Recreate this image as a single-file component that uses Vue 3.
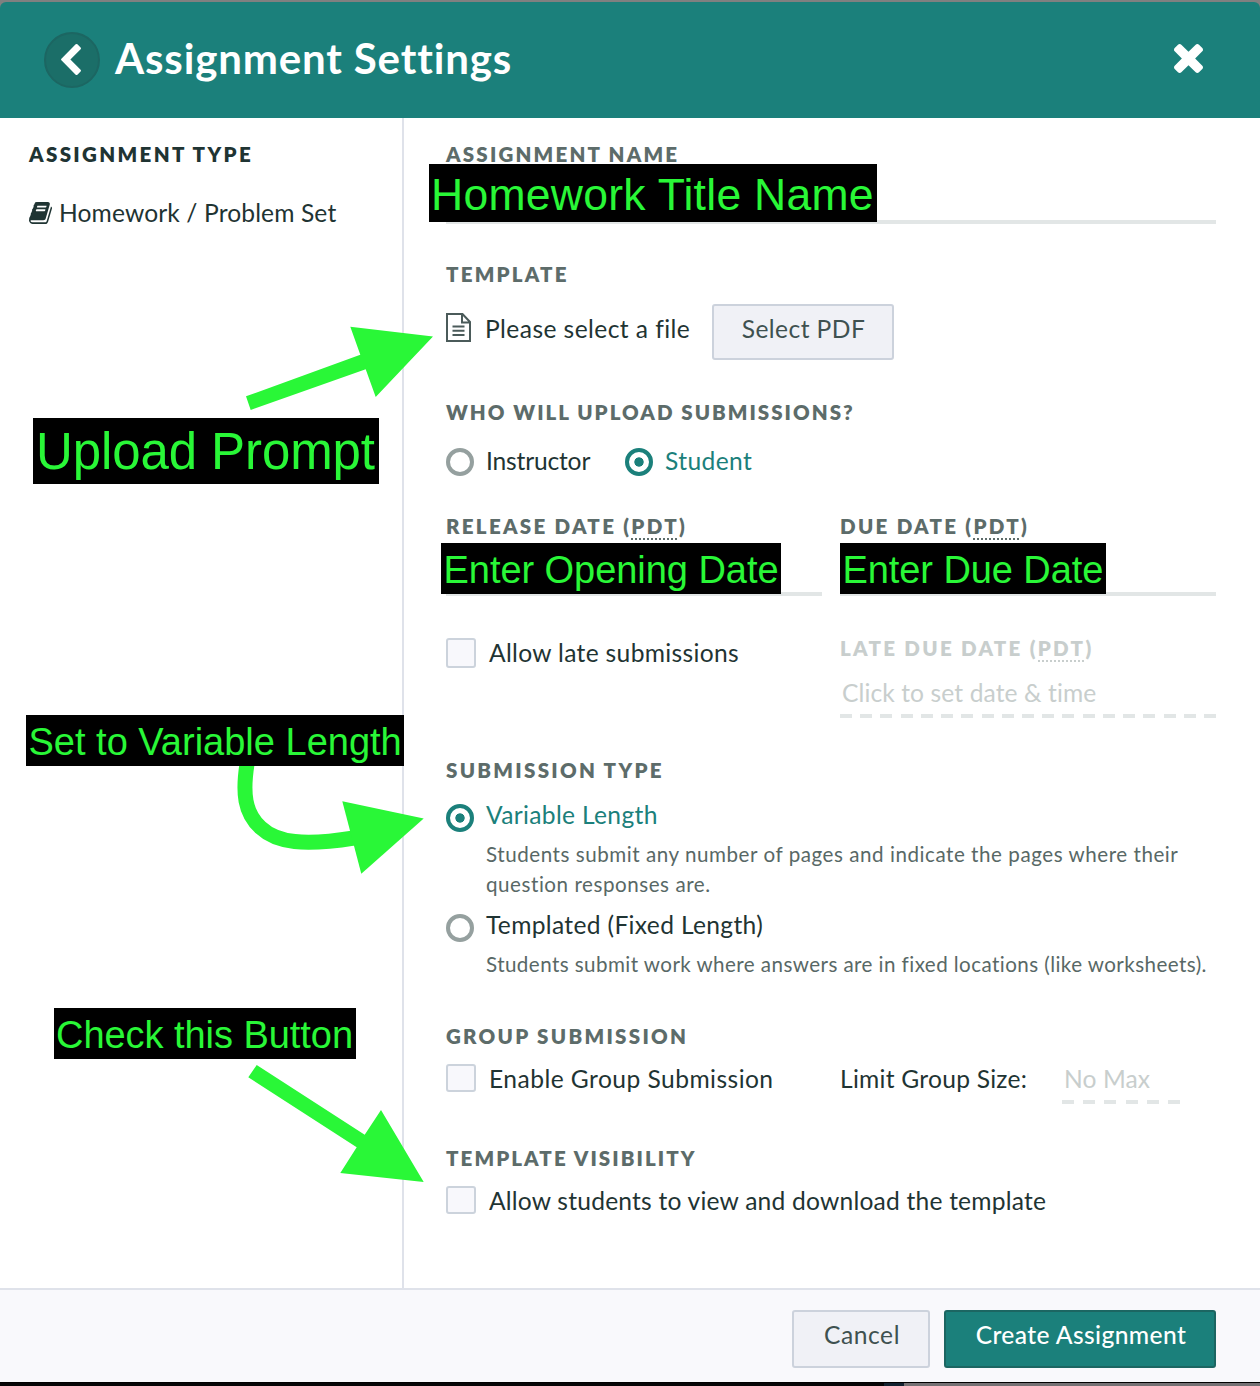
<template>
  <div class="screen">
    <header class="head">
      <button class="back" aria-label="Back">
        <svg viewBox="410 26 1036 1612"><path d="M1427 301l-531 531 531 531q19 19 19 45t-19 45l-166 166q-19 19-45 19t-45-19l-742-742q-19-19-19-45t19-45l742-742q19-19 45-19t45 19l166 166q19 19 19 45t-19 45z" /></svg>
      </button>
      <h1>Assignment Settings</h1>
      <svg class="close" viewBox="302 366 1188 1188"><path d="M1490 1322q0 40-28 68l-136 136q-28 28-68 28t-68-28l-294-294-294 294q-28 28-68 28t-68-28l-136-136q-28-28-28-68t28-68l294-294-294-294q-28-28-28-68t28-68l136-136q28-28 68-28t68 28l294 294 294-294q28-28 68-28t68 28l136 136q28 28 28 68t-28 68l-294 294 294 294q28 28 28 68z" /></svg>
    </header>

    <div class="body">
      <aside class="side">
        <h2 class="label dark">Assignment type</h2>
        <div class="kind">
          <svg class="book" viewBox="0 128 1664 1536" preserveAspectRatio="none"><path d="M1639 478q40 57 18 129l-275 906q-19 64-76.500 107.500t-122.500 43.500h-923q-77 0-148.500-53.500t-99.500-131.500q-24-67-2-127 0-4 3-27t4-37q1-8-3-21.500t-3-19.500q2-11 8-21t16.500-23.500 16.500-23.500q23-38 45-91.500t30-91.500q3-10 .5-30t-.5-28q3-11 17-28t17-23q21-36 42-92t25-90q1-9-2.500-32t.5-28q4-13 22-30.500t22-22.500q19-26 42.500-84.500t27.500-96.500q1-8-3-25.500t-2-26.500q2-8 9-18t18-23 17-21q8-12 16.500-30.500t15-35 16-36 19.500-32 26.500-23.500 36-11.500 47.500 5.500l-1 3q38-9 51-9h761q74 0 114 56t18 130l-274 906q-36 119-71.500 153.500t-128.500 34.500h-869q-27 0-38 15-11 16-1 43 24 70 144 70h923q29 0 56-15.500t35-41.500l300-987q7-22 5-57 38 15 59 43zm-1064 2q-4 13 2 22.500t20 9.500h608q13 0 25.500-9.500t16.500-22.500l21-64q4-13-2-22.500t-20-9.500h-608q-13 0-25.500 9.500t-16.500 22.500zm-83 256q-4 13 2 22.500t20 9.500h608q13 0 25.500-9.500t16.500-22.500l21-64q4-13-2-22.500t-20-9.500h-608q-13 0-25.500 9.500t-16.500 22.500z" /></svg>
          <span>Homework / Problem Set</span>
        </div>
      </aside>

      <main class="form">
        <section class="name">
          <h2 class="label">Assignment name</h2>
          <div class="field"></div>
        </section>

        <section class="template">
          <h2 class="label">Template</h2>
          <div class="file-row">
            <svg class="file" viewBox="0 0 25 29"><path d="M1 1h15.500l7.500 8v19H1z M16 1v8.500h8 M6.500 13.500h12 M6.500 17.800h12 M6.500 22h12" /></svg>
            <span class="file-text">Please select a file</span>
            <button class="btn pick">Select PDF</button>
          </div>
        </section>

        <section class="who">
          <h2 class="label">Who will upload submissions?</h2>
          <div class="radios">
            <label class="option"><i class="radio"></i><span>Instructor</span></label>
            <label class="option on"><i class="radio"></i><span>Student</span></label>
          </div>
        </section>

        <section class="pair dates">
          <div>
            <h2 class="label">Release date (<abbr>PDT</abbr>)</h2>
            <div class="field"></div>
          </div>
          <div>
            <h2 class="label">Due date (<abbr>PDT</abbr>)</h2>
            <div class="field"></div>
          </div>
        </section>

        <section class="pair late">
          <label class="check"><i class="box tall"></i><span>Allow late submissions</span></label>
          <div class="off">
            <h2 class="label">Late due date (<abbr>PDT</abbr>)</h2>
            <div class="dashed">Click to set date &amp; time</div>
          </div>
        </section>

        <section class="type">
          <h2 class="label">Submission type</h2>
          <label class="option on"><i class="radio"></i><span>Variable Length</span></label>
          <p class="any-length">Students submit any number of pages and indicate the pages where their<br>question responses are.</p>
          <label class="option"><i class="radio"></i><span>Templated (Fixed Length)</span></label>
          <p>Students submit work where answers are in fixed locations (like worksheets).</p>
        </section>

        <section class="group">
          <h2 class="label">Group submission</h2>
          <div class="pair">
            <label class="check"><i class="box"></i><span>Enable Group Submission</span></label>
            <div class="limit"><span class="limit-label">Limit Group Size:</span><div class="dashed small">No Max</div></div>
          </div>
        </section>

        <section class="visibility">
          <h2 class="label">Template visibility</h2>
          <label class="check"><i class="box"></i><span>Allow students to view and download the template</span></label>
        </section>
      </main>
    </div>

    <footer class="foot">
      <button class="btn cancel">Cancel</button>
      <button class="btn create">Create Assignment</button>
    </footer>
    <div class="edge"><i class="navy"></i><i class="grey"></i></div>

    <svg class="arrows" viewBox="0 0 1260 1386">
      <path d="M246 396.300L360.300 354.700L350.300 326.700L433 336.500L375.700 397L365.700 369.300L250.700 410z" />
      <path class="bend" d="M247 764C242.500 793 244.500 813 260.500 827.500C277 843 304 846 354 838" />
      <path d="M342.300 801.300L423.700 818.500L361.300 873.700z" />
      <path d="M256.700 1065L364.700 1134.700L381 1110L423.700 1182L340.300 1173L356.700 1147.300L248.300 1077.300z" />
    </svg>
    <div class="note n-title">Homework Title Name</div>
    <div class="note n-upload">Upload Prompt</div>
    <div class="note n-open">Enter Opening Date</div>
    <div class="note n-due">Enter Due Date</div>
    <div class="note n-length">Set to Variable Length</div>
    <div class="note n-check">Check this Button</div>
  </div>
</template>

<script setup>
</script>

<style>
body { margin: 0; }
</style>

<style scoped>
* { box-sizing: border-box; }
.screen { position: relative; width: 1260px; height: 1386px; overflow: hidden; display: flex; flex-direction: column; padding-top: 2px; background: #808080; color: #1f3433; font: 24.6px/30px Lato, "Open Sans", sans-serif; font-variant-ligatures: none; letter-spacing: .330px; white-space: nowrap; }
h1, h2, p { margin: 0; }
button { font: inherit; font-variant-ligatures: none; letter-spacing: inherit; padding: 0; }
.head { height: 116px; flex: none; display: flex; align-items: center; padding: 0 57px 0 44px; background: #1b807b; border-radius: 6px 6px 0 0; color: #fff; }
.back { width: 56px; height: 56px; border: 2px solid #1c6662; border-radius: 50%; background: #1b6e68; display: flex; align-items: center; justify-content: center; padding: 0 3px 2px 0; }
.back svg { width: 20px; height: 31px; fill: #fff; }
h1 { margin: 0 0 5px 15px; font-size: 42px; line-height: 50px; font-weight: 700; letter-spacing: .850px; flex: 1; }
.close { width: 29px; height: 29px; margin-bottom: 4px; fill: #fff; }
.body { height: 1170px; flex: none; display: flex; background: #fff; }
.side { width: 404px; border-right: 2px solid #dfe2ea; padding: 21px 0 0 29px; }
.label { font-size: 20.5px; line-height: 30px; height: 30px; font-weight: 800; letter-spacing: 2.300px; text-transform: uppercase; color: #5d6c6a; }
.label.dark { color: #1f3433; letter-spacing: 2.350px; }
.kind { display: flex; align-items: center; gap: 7px; margin-top: 29px; letter-spacing: .120px; }
.book { width: 23px; height: 22px; fill: #1f3433; }
.form { flex: 1; padding: 21px 44px 0 42px; }
.name .label, .template .label { letter-spacing: 2.200px; }
.field { height: 55px; border-bottom: 4px solid #e2e6e6; }
.template { margin-top: 35px; }
.file-row { display: flex; margin-top: 15px; height: 56px; letter-spacing: .420px; }
.file { width: 25px; height: 29px; margin-top: 9px; fill: none; stroke: #4b5b5a; stroke-width: 2; }
.file-text { width: 227px; margin: 10px 0 0 14px; }
.btn { border: 2px solid #ccd2dc; border-radius: 3px; background: #f0f1f6; color: #3f5150; display: flex; justify-content: center; }
.pick { width: 182px; height: 56px; padding-top: 8px; padding-left: 1px; }
.who { margin-top: 37px; }
.who .label { letter-spacing: 2.020px; }
.radios { display: flex; margin-top: 19px; letter-spacing: .400px; }
.radios .option:first-child { width: 179px; letter-spacing: -.180px; }
.option { display: flex; gap: 12px; height: 30px; }
.radio { flex: none; width: 28px; height: 28px; margin-top: 2px; border: 4px solid #95a09f; border-radius: 50%; }
.on { color: #1b807b; }
.on .radio { border-color: #1b807b; background: radial-gradient(circle, #1b807b 4.300px, transparent 5px); }
.pair { display: grid; grid-template-columns: 376px 376px; gap: 18px; }
.dates { margin-top: 35px; }
abbr { background: repeating-linear-gradient(90deg, currentColor 0 2px, transparent 2px 4px) left bottom / 100% 2px no-repeat; padding-bottom: 2px; }
.late { margin-top: 37px; }
.check { display: flex; gap: 13px; height: 30px; }
.late .check { margin-top: 5px; }
.box { flex: none; width: 30px; height: 28px; border: 2px solid #ccd3dc; border-radius: 3px; background: #f8f8fc; }
.box.tall { height: 30px; }
.off { color: #c8cecd; }
.off .label { color: #c8cecd; }
.dashed { height: 40px; margin-top: 15px; padding-left: 2px; letter-spacing: .100px; background: repeating-linear-gradient(90deg, #e2e6e6 0 12px, transparent 12px 20.220px) left bottom / 100% 4px no-repeat; }
.type { margin-top: 37px; }
.type .option { margin-top: 15px; }
.type .radio { margin-top: 4px; }
.type p { margin: 9px 0 0 40px; font-size: 20.6px; letter-spacing: .430px; color: #586866; }
.type .any-length { letter-spacing: .540px; }
.type p + .option { margin-top: 11px; }
.group { margin-top: 42px; }
.group .pair, .visibility .check { margin-top: 13px; }
.group .check { letter-spacing: .450px; }
.limit { display: flex; letter-spacing: .250px; }
.limit-label { width: 222px; }
.small { width: 118px; margin: 0; color: #c8cecd; background-image: repeating-linear-gradient(90deg, #e2e6e6 0 12px, transparent 12px 21.200px); }
.visibility { margin-top: 39px; }
.visibility .label { letter-spacing: 2.080px; }
.visibility .check { letter-spacing: .210px; }
.foot { height: 94px; flex: none; display: flex; justify-content: flex-end; gap: 14px; padding: 20px 44px 0 0; background: #f9f9fc; border-top: 2px solid #dfe2ea; }
.foot .btn { height: 58px; padding-top: 8px; }
.foot .cancel { width: 138px; letter-spacing: .550px; padding-left: 2px; }
.foot .create { width: 272px; background: #1b807b; border-color: #1c6662; color: #fff; font-weight: 500; letter-spacing: .400px; padding-left: 2px; }
.edge { height: 4px; flex: none; display: flex; justify-content: flex-end; background: #060607; border-top: 1px solid #000; }
.navy { width: 20px; background: #122230; }
.grey { width: 356px; background: #757174; }
.arrows { position: absolute; left: 0; top: 0; width: 1260px; height: 1386px; fill: #29f737; }
.bend { fill: none; stroke: #29f737; stroke-width: 15; }
.note { position: absolute; background: #000; color: #29f737; font-family: "Liberation Sans", Arial, sans-serif; font-size: 38px; line-height: 47px; height: 51px; padding: 4px 0 0 2.5px; letter-spacing: -.05px; }
.n-title { left: 429px; top: 164px; width: 448px; height: 58px; font-size: 44.500px; line-height: 54px; letter-spacing: .270px; padding-left: 2px; }
.n-upload { left: 33px; top: 417.500px; width: 346px; height: 66px; font-size: 51px; line-height: 62px; padding: 3px 0 0 3px; letter-spacing: -.1px; }
.n-open { left: 441px; top: 543px; width: 340px; }
.n-due { left: 840px; top: 543px; width: 266px; letter-spacing: -.08px; }
.n-length { left: 26px; top: 715px; width: 378px; letter-spacing: 0; }
.n-check { left: 54px; top: 1008px; width: 302px; padding-left: 2px; }
</style>
